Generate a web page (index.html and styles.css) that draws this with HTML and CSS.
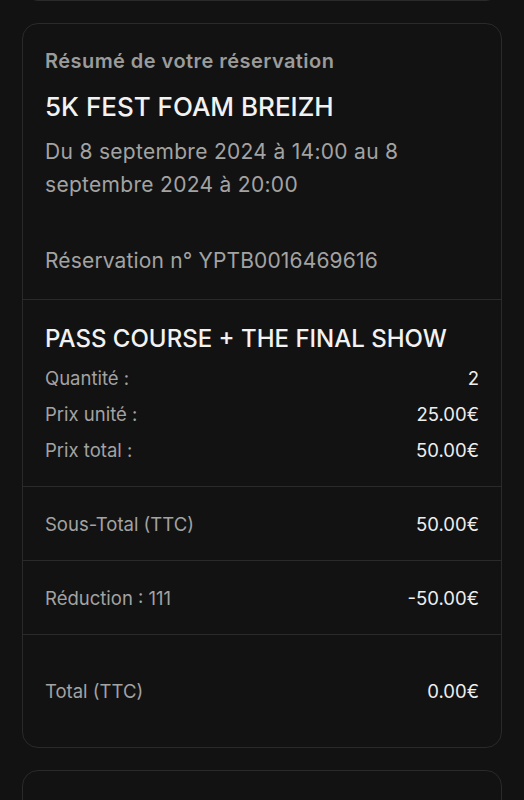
FILE: index.html
```html
<!DOCTYPE html>
<html lang="fr">
<head>
	<meta charset="UTF-8">
	<meta name="viewport" content="width=device-width">
	<title>Résumé de votre réservation</title>
	<link rel="stylesheet" href="styles.css">
</head>
<body>
<main class="page">

	<!-- bottom of the previous block, scrolled out of view -->
	<div class="card card-prev"></div>

	<section class="card">
		<div class="card-section intro">
			<h2 class="eyebrow">Résumé de votre réservation</h2>
			<h1 class="event-name">5K FEST FOAM BREIZH</h1>
			<p class="event-date">Du 8 septembre 2024 à 14:00 au 8 septembre 2024 à 20:00</p>
			<p class="booking-ref">Réservation n° YPTB0016469616</p>
		</div>

		<div class="card-section ticket">
			<h3 class="ticket-name">PASS COURSE + THE FINAL SHOW</h3>
			<div class="line"><span class="label">Quantité :</span><span class="value">2</span></div>
			<div class="line"><span class="label">Prix unité :</span><span class="value">25.00€</span></div>
			<div class="line"><span class="label">Prix total :</span><span class="value">50.00€</span></div>
		</div>

		<div class="card-section sum">
			<div class="line"><span class="label">Sous-Total (TTC)</span><span class="value">50.00€</span></div>
		</div>

		<div class="card-section sum">
			<div class="line"><span class="label">Réduction : 111</span><span class="value">-50.00€</span></div>
		</div>

		<div class="card-section total">
			<div class="line"><span class="label">Total (TTC)</span><span class="value">0.00€</span></div>
		</div>
	</section>

	<div class="card card-next"></div>

</main>
</body>
</html>
```

FILE: styles.css
```css
html, body {
	margin: 0;
	background: #121212;
}

body {
	font-family: Inter, "Noto Sans", sans-serif;
	color: #ededed;
	overflow: hidden;
}

.page {
	display: flex;
	flex-direction: column;
	gap: 22px;
	padding: 0 22px;
}

.card {
	border: 1px solid #2a2a2a;
	border-radius: 16px;
	background: #121212;
}

.card-prev {
	height: 30px;
	margin-top: -31px;
}

.card-next {
	height: 60px;
}

.card-section {
	padding: 0 22px;
}

.card-section + .card-section {
	border-top: 1px solid #2a2a2a;
}

h1, h2, h3, p {
	margin: 0;
	font-weight: 500;
}

/* intro */
.intro {
	padding-top: 23px;
	padding-bottom: 22px;
}

.eyebrow {
	font-size: 20px;
	line-height: 28px;
	font-weight: 600;
	letter-spacing: 0.45px;
	color: #9b9b9b;
}

.event-name {
	margin-top: 17px;
	font-size: 26px;
	line-height: 30px;
	color: #f2f2f2;
}

.event-date {
	margin-top: 13px;
	font-size: 21px;
	line-height: 33px;
	font-weight: 400;
	letter-spacing: 0.3px;
	color: #a3a3a3;
}

.booking-ref {
	margin-top: 43px;
	font-size: 21px;
	line-height: 33px;
	font-weight: 400;
	letter-spacing: 0.15px;
	color: #a3a3a3;
}

/* ticket lines */
.ticket {
	padding-top: 24px;
	padding-bottom: 18px;
}

.ticket-name {
	font-size: 24px;
	line-height: 30px;
	color: #f2f2f2;
	margin-bottom: 6px;
}

.line {
	display: flex;
	justify-content: space-between;
	align-items: center;
	font-size: 18.5px;
	line-height: 36px;
}

.label {
	color: #a3a3a3;
}

.value {
	color: #ededed;
}

.sum {
	padding-top: 19px;
	padding-bottom: 18px;
}

.total {
	padding-top: 38px;
	padding-bottom: 38px;
}
```
